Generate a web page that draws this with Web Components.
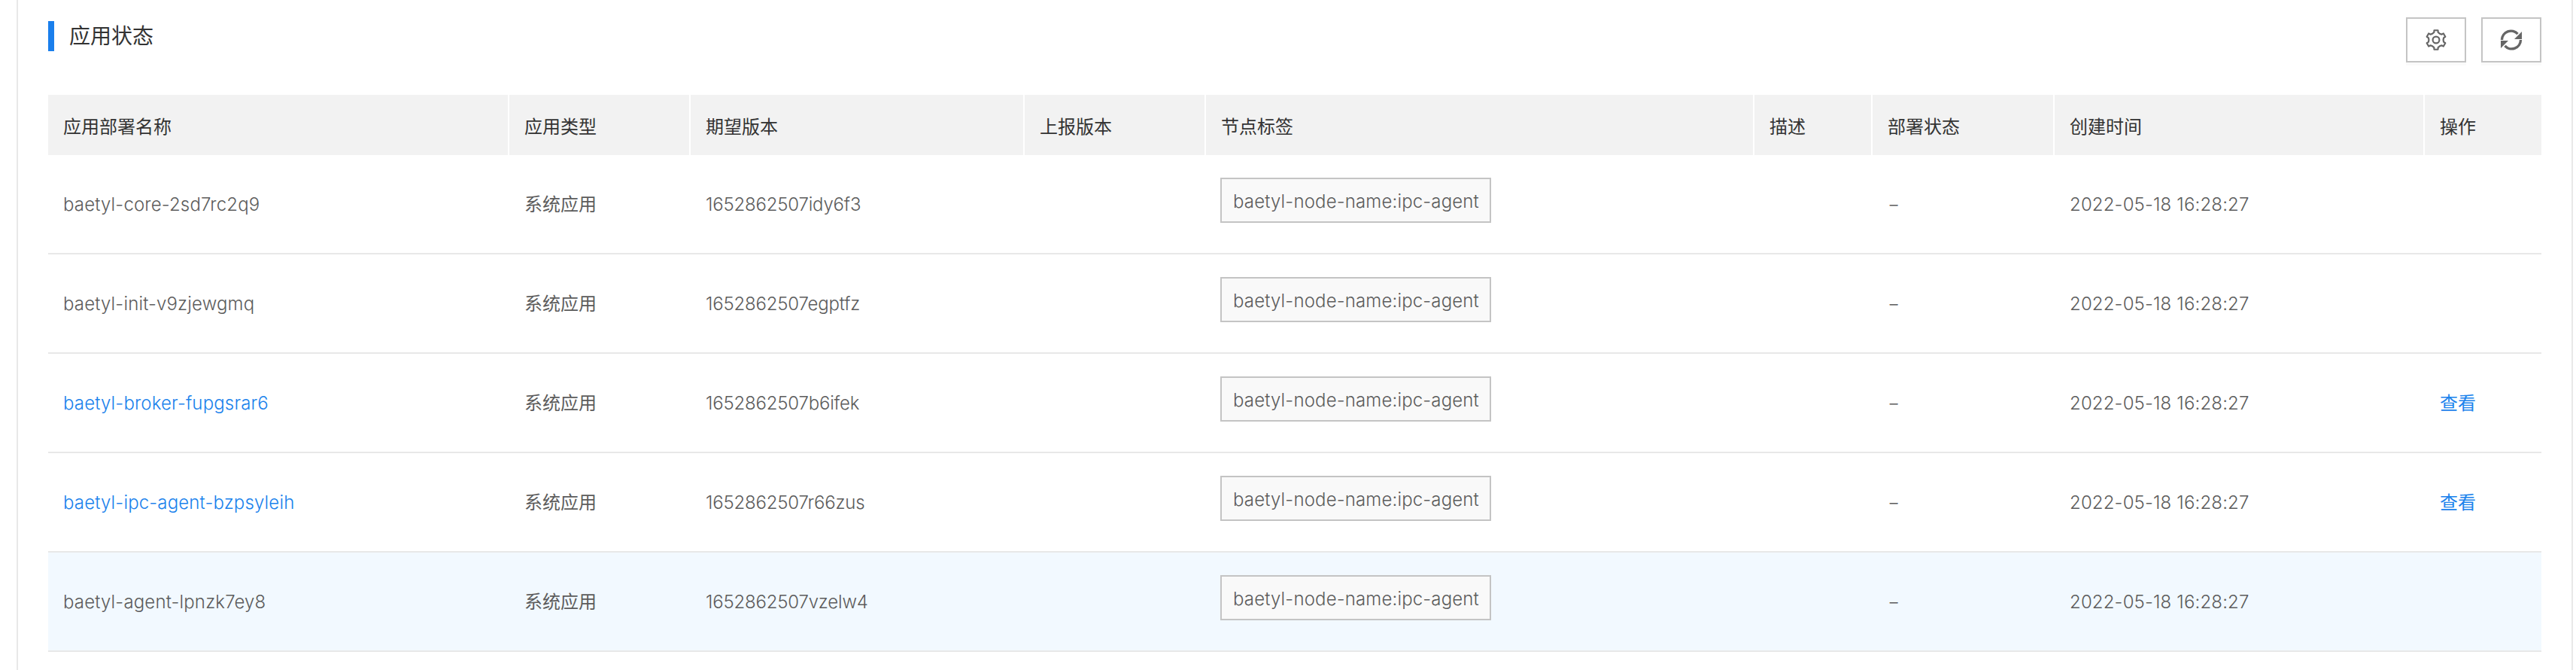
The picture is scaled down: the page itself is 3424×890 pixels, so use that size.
<!DOCTYPE html>
<html lang="zh-CN"><head><meta charset="utf-8"><title>应用状态</title>
<style>
html,body{margin:0;padding:0;background:#fff}
body{font-family:Inter,"Noto Sans CJK SC",sans-serif;font-size:24px;font-weight:300;color:#5c5c5c}
</style></head><body>
<status-panel heading="应用状态">
  <icon-button slot="actions" icon="gear" label="设置"></icon-button>
  <icon-button slot="actions" icon="refresh" label="刷新"></icon-button>
  <status-table>
    <table-row head><table-cell>应用部署名称</table-cell><table-cell>应用类型</table-cell><table-cell>期望版本</table-cell><table-cell>上报版本</table-cell><table-cell>节点标签</table-cell><table-cell>描述</table-cell><table-cell>部署状态</table-cell><table-cell>创建时间</table-cell><table-cell>操作</table-cell></table-row>
    <table-row><table-cell>baetyl-core-2sd7rc2q9</table-cell><table-cell cjk>系统应用</table-cell><table-cell tight>1652862507idy6f3</table-cell><table-cell></table-cell><table-cell><node-tag>baetyl-node-name:ipc-agent</node-tag></table-cell><table-cell></table-cell><table-cell><status-dash>-</status-dash></table-cell><table-cell>2022-05-18 16:28:27</table-cell><table-cell></table-cell></table-row>
    <table-row><table-cell>baetyl-init-v9zjewgmq</table-cell><table-cell cjk>系统应用</table-cell><table-cell tight>1652862507egptfz</table-cell><table-cell></table-cell><table-cell><node-tag>baetyl-node-name:ipc-agent</node-tag></table-cell><table-cell></table-cell><table-cell><status-dash>-</status-dash></table-cell><table-cell>2022-05-18 16:28:27</table-cell><table-cell></table-cell></table-row>
    <table-row><table-cell><text-link>baetyl-broker-fupgsrar6</text-link></table-cell><table-cell cjk>系统应用</table-cell><table-cell tight>1652862507b6ifek</table-cell><table-cell></table-cell><table-cell><node-tag>baetyl-node-name:ipc-agent</node-tag></table-cell><table-cell></table-cell><table-cell><status-dash>-</status-dash></table-cell><table-cell>2022-05-18 16:28:27</table-cell><table-cell cjk><text-link>查看</text-link></table-cell></table-row>
    <table-row><table-cell><text-link>baetyl-ipc-agent-bzpsyleih</text-link></table-cell><table-cell cjk>系统应用</table-cell><table-cell tight>1652862507r66zus</table-cell><table-cell></table-cell><table-cell><node-tag>baetyl-node-name:ipc-agent</node-tag></table-cell><table-cell></table-cell><table-cell><status-dash>-</status-dash></table-cell><table-cell>2022-05-18 16:28:27</table-cell><table-cell cjk><text-link>查看</text-link></table-cell></table-row>
    <table-row highlight><table-cell>baetyl-agent-lpnzk7ey8</table-cell><table-cell cjk>系统应用</table-cell><table-cell tight>1652862507vzelw4</table-cell><table-cell></table-cell><table-cell><node-tag>baetyl-node-name:ipc-agent</node-tag></table-cell><table-cell></table-cell><table-cell><status-dash>-</status-dash></table-cell><table-cell>2022-05-18 16:28:27</table-cell><table-cell></table-cell></table-row>
  </status-table>
</status-panel>
<script>
function define(name, html, extra){
  customElements.define(name, class extends HTMLElement{
    constructor(){super();this.attachShadow({mode:'open'}).innerHTML=html;}
    connectedCallback(){ if(extra) extra(this); }
  });
}
define('status-panel',`<style>
:host{display:block;box-sizing:border-box;margin-left:22px;width:3398px;min-height:890px;border:solid #e8e8e8;border-width:0 2px;padding:23px 40px 0 40px;background:#fff}
.top{display:flex;justify-content:space-between;align-items:flex-start;margin-bottom:43px;height:60px}
h2{margin:5px 0 0;border-left:8px solid #1a7fec;padding-left:20px;font-size:28px;line-height:40px;font-weight:400;color:#333}
.acts{display:flex;gap:20px}
</style><div class="top"><h2 id="t"></h2><div class="acts"><slot name="actions"></slot></div></div><slot></slot>`,
el=>{el.shadowRoot.getElementById('t').textContent=el.getAttribute('heading');});

function gearPath(){
  const pts=[];
  for(let i=0;i<6;i++){
    const a=i*60-90;
    [[-30,9.6],[-15,10.4],[-11,13],[11,13],[15,10.4]].forEach(([d,r])=>{
      const t=(a+d)*Math.PI/180;
      pts.push((15+r*Math.cos(t)).toFixed(2)+' '+(15+r*Math.sin(t)).toFixed(2));
    });
  }
  return 'M'+pts.join('L')+'Z';
}
const icons={
 gear:`<svg width="30" height="30" viewBox="0 0 30 30" fill="none" stroke="#666" stroke-width="2.200" stroke-linejoin="round"><path d="${gearPath()}"/><circle cx="15" cy="15" r="4.400"/></svg>`,
 refresh:`<svg width="30" height="28" viewBox="0 0 30 28" fill="none"><path d="M2.500 14A12 12 0 0 1 23.500 6.200" stroke="#666" stroke-width="3.400"/><path d="M27.500 14A12 12 0 0 1 6.500 21.800" stroke="#666" stroke-width="3.400"/><path d="M29 3V13H19Z" fill="#666"/><path d="M1 25V15H11Z" fill="#666"/></svg>`
};
define('icon-button',`<style>
:host{display:flex;box-sizing:border-box;width:80px;height:60px;border:2px solid #c4c4c4;background:#fff;align-items:center;justify-content:center;box-shadow:0 4px 0 #fafafa}
svg{display:block}
</style><span id="i" style="display:contents"></span>`,
el=>{el.shadowRoot.getElementById('i').innerHTML=icons[el.getAttribute('icon')];el.setAttribute('role','button');el.setAttribute('aria-label',el.getAttribute('label'));});
define('status-table',`<style>:host{display:block;--cols:613px 241px 444px 241px 729px 157px 242px 492px 155px}</style><slot></slot>`);
define('table-row',`<style>
:host{display:grid;grid-template-columns:var(--cols);box-sizing:border-box;height:132px;border-bottom:2px solid #e8e8e8;align-items:stretch;letter-spacing:.15px}
:host([head]){height:80px;border-bottom:0;color:#333;font-weight:400;letter-spacing:0;--sep:#fff;--cellbg:#f2f2f2}
:host([highlight]){background:#f2f9ff}
</style><slot></slot>`);
define('table-cell',`<style>
:host{display:flex;align-items:center;box-sizing:border-box;padding-left:20px;white-space:nowrap;min-width:0;background:var(--cellbg,transparent);border-right:2px solid var(--sep,transparent)}
:host(:last-child){border-right:0}
:host([cjk]){padding-bottom:3px;font-weight:400;letter-spacing:0}
:host([tight]){letter-spacing:-.2px}
</style><slot></slot>`);
define('node-tag',`<style>
:host{display:inline-block;box-sizing:border-box;width:360px;height:60px;line-height:59px;padding:0 15px;border:2px solid #c4c4c4;background:#f9f9f9;margin-bottom:10px;white-space:nowrap;margin-left:-1px}
</style><slot></slot>`);
define('text-link',`<style>:host{display:inline;color:#1a82ec;cursor:pointer}</style><slot></slot>`);
define('status-dash',`<style>:host{display:inline-block;transform:scaleX(1.5);transform-origin:left center}</style><slot></slot>`);
</script>
</body></html>
